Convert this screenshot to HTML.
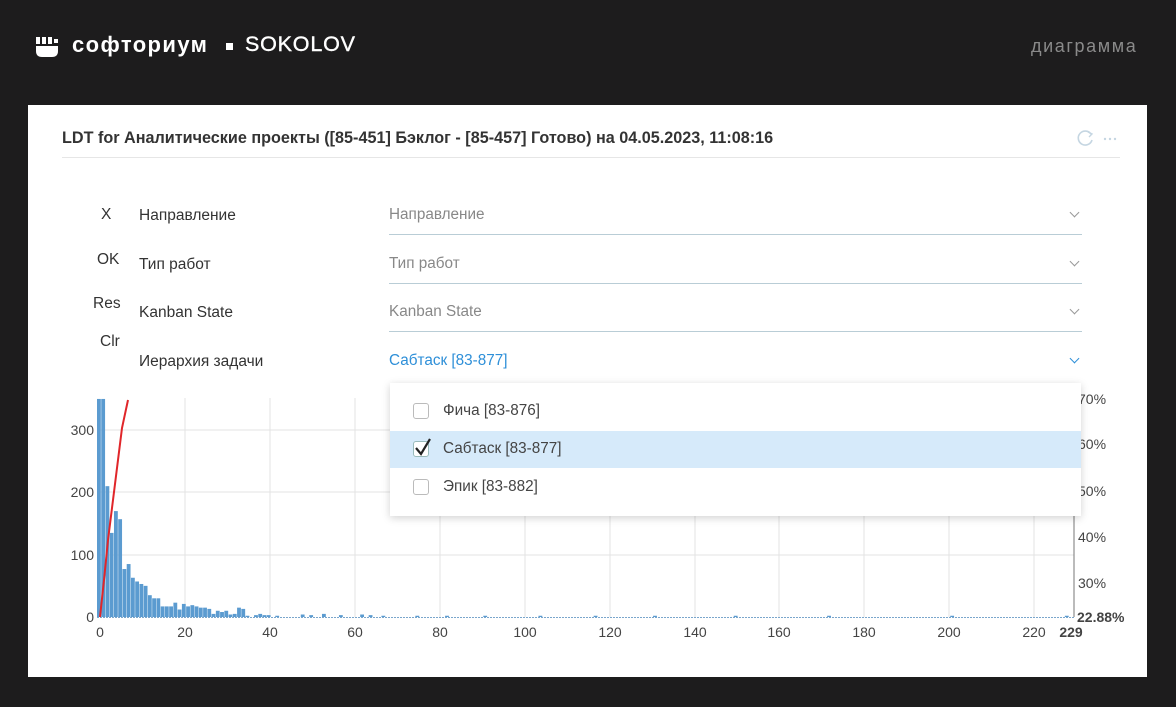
<!DOCTYPE html>
<html><head><meta charset="utf-8"><style>
*{margin:0;padding:0;box-sizing:border-box}
body{width:1176px;height:707px;background:#1d1c1d;font-family:"Liberation Sans",sans-serif;position:relative;overflow:hidden}
.a{position:absolute;white-space:nowrap}
.panel{position:absolute;left:28px;top:105px;width:1119px;height:572px;background:#fff}
.lbl{font-size:15.5px;color:#333}
.ph{font-size:15.3px;color:#888}
.line{position:absolute;height:1px;background:#b9cdd6;left:389px;width:693px}
.chev{position:absolute;left:1071px;width:7px;height:7px;border-right:1.5px solid #999;border-bottom:1.5px solid #999;transform:rotate(45deg)}
.cb{position:absolute;left:413px;width:16px;height:16px;border:1px solid #bbb;border-radius:3px;background:#fff}
</style></head><body>
<svg class="a" style="left:35px;top:36px" width="24" height="22" viewBox="0 0 24 22"><rect x="1" y="1" width="4" height="7" fill="#fff"/><rect x="7" y="1" width="4" height="7" fill="#fff"/><rect x="13" y="1" width="4" height="7" fill="#fff"/><rect x="19" y="3" width="4" height="4" fill="#fff"/><path d="M1 10H23V15Q23 21 17 21H7Q1 21 1 15Z" fill="#fff"/></svg>
<div class="a" style="left:72px;top:32px;font-size:22px;font-weight:bold;color:#fff;letter-spacing:1.4px">софториум</div>
<div class="a" style="left:226px;top:43px;width:7px;height:7px;background:#fff"></div>
<div class="a" style="left:245px;top:32px;font-size:21.5px;color:#fff;letter-spacing:0.8px;-webkit-text-stroke:0.4px #fff">SOKOLOV</div>
<div class="a" style="left:1031px;top:36px;font-size:18px;color:#8a8a8a;letter-spacing:1.6px">диаграмма</div>
<div class="panel"></div>
<div class="a" style="left:62px;top:129px;font-size:16.2px;font-weight:bold;color:#333">LDT for Аналитические проекты ([85-451] Бэклог - [85-457] Готово) на 04.05.2023, 11:08:16</div>
<div class="a" style="left:62px;top:157px;width:1058px;height:1px;background:#e6e6e6"></div>
<svg class="a" style="left:1076px;top:129px" width="45" height="18"><path d="M15 5A7 7 0 1 0 16 11" fill="none" stroke="#c5d6e2" stroke-width="1.6"/><path d="M12 3L16 5L13 8" fill="none" stroke="#c5d6e2" stroke-width="1.4"/><circle cx="29" cy="10" r="1.2" fill="#c5d6e2"/><circle cx="34" cy="10" r="1.2" fill="#c5d6e2"/><circle cx="39" cy="10" r="1.2" fill="#c5d6e2"/></svg>
<div class="a lbl" style="left:101px;top:206px">X</div>
<div class="a lbl" style="left:97px;top:251px">OK</div>
<div class="a lbl" style="left:93px;top:295px">Res</div>
<div class="a lbl" style="left:100px;top:333px">Clr</div>
<div class="a lbl" style="left:139px;top:207px">Направление</div>
<div class="a lbl" style="left:139px;top:256px">Тип работ</div>
<div class="a lbl" style="left:139px;top:304px">Kanban State</div>
<div class="a lbl" style="left:139px;top:353px">Иерархия задачи</div>
<div class="a ph" style="left:389px;top:206px">Направление</div>
<div class="a ph" style="left:389px;top:255px">Тип работ</div>
<div class="a ph" style="left:389px;top:303px">Kanban State</div>
<div class="a" style="left:389px;top:352px;font-size:15.3px;color:#2e8fd8">Сабтаск [83-877]</div>
<div class="line" style="top:234px"></div><div class="line" style="top:283px"></div><div class="line" style="top:331px"></div>
<div class="chev" style="top:209px"></div><div class="chev" style="top:258px"></div><div class="chev" style="top:306px"></div>
<div class="chev" style="top:355px;border-color:#2e8fd8"></div>
<svg class="a" style="left:0;top:0" width="1176" height="707">
<g stroke="#e3e3e3" stroke-width="1">
<line x1="97" y1="430" x2="1074" y2="430"/><line x1="97" y1="492" x2="1074" y2="492"/><line x1="97" y1="555" x2="1074" y2="555"/>
<line x1="185" y1="398" x2="185" y2="617"/><line x1="270" y1="398" x2="270" y2="617"/><line x1="355" y1="398" x2="355" y2="617"/><line x1="440" y1="398" x2="440" y2="617"/><line x1="525" y1="398" x2="525" y2="617"/><line x1="610" y1="398" x2="610" y2="617"/><line x1="695" y1="398" x2="695" y2="617"/><line x1="779" y1="398" x2="779" y2="617"/><line x1="864" y1="398" x2="864" y2="617"/><line x1="949" y1="398" x2="949" y2="617"/><line x1="1034" y1="398" x2="1034" y2="617"/>
</g>
<line x1="1074" y1="395" x2="1074" y2="617" stroke="#777"/>
<line x1="97" y1="617.5" x2="1074" y2="617.5" stroke="#7aa6cc" stroke-dasharray="2 1"/>
<g transform="translate(97,617) scale(4.245,-0.623)" fill="#5b9bd0">
<rect x="0" width="0.9" height="350"/><rect x="1" width="0.9" height="350"/><rect x="2" width="0.9" height="210"/><rect x="3" width="0.9" height="135"/><rect x="4" width="0.9" height="170"/><rect x="5" width="0.9" height="157"/><rect x="6" width="0.9" height="77"/><rect x="7" width="0.9" height="85"/><rect x="8" width="0.9" height="63"/><rect x="9" width="0.9" height="57"/><rect x="10" width="0.9" height="53"/><rect x="11" width="0.9" height="50"/><rect x="12" width="0.9" height="35"/><rect x="13" width="0.9" height="30"/><rect x="14" width="0.9" height="30"/><rect x="15" width="0.9" height="17"/><rect x="16" width="0.9" height="17"/><rect x="17" width="0.9" height="17"/><rect x="18" width="0.9" height="23"/><rect x="19" width="0.9" height="12"/><rect x="20" width="0.9" height="21"/><rect x="21" width="0.9" height="17"/><rect x="22" width="0.9" height="19"/><rect x="23" width="0.9" height="17"/><rect x="24" width="0.9" height="15"/><rect x="25" width="0.9" height="15"/><rect x="26" width="0.9" height="13"/><rect x="27" width="0.9" height="5"/><rect x="28" width="0.9" height="10"/><rect x="29" width="0.9" height="8"/><rect x="30" width="0.9" height="10"/><rect x="31" width="0.9" height="4"/><rect x="32" width="0.9" height="5"/><rect x="33" width="0.9" height="15"/><rect x="34" width="0.9" height="13"/><rect x="35" width="0.9" height="2"/><rect x="37" width="0.9" height="3"/><rect x="38" width="0.9" height="5"/><rect x="39" width="0.9" height="3"/><rect x="40" width="0.9" height="3"/><rect x="42" width="0.9" height="2"/><rect x="48" width="0.9" height="4"/><rect x="50" width="0.9" height="3"/><rect x="53" width="0.9" height="5"/><rect x="57" width="0.9" height="3"/><rect x="62" width="0.9" height="4"/><rect x="64" width="0.9" height="3"/><rect x="67" width="0.9" height="2"/><rect x="75" width="0.9" height="2"/><rect x="82" width="0.9" height="2"/><rect x="91" width="0.9" height="2"/><rect x="104" width="0.9" height="2"/><rect x="117" width="0.9" height="2"/><rect x="131" width="0.9" height="2"/><rect x="150" width="0.9" height="2"/><rect x="172" width="0.9" height="2"/><rect x="201" width="0.9" height="2"/><rect x="228" width="0.9" height="2"/>
</g>
<path d="M100 617L104 580L108 540L113 500L118 460L122 428L128 400" fill="none" stroke="#e0262a" stroke-width="2"/>
<g font-size="14" fill="#444" font-family="Liberation Sans,sans-serif">
<text x="94" y="435" text-anchor="end">300</text><text x="94" y="497" text-anchor="end">200</text><text x="94" y="560" text-anchor="end">100</text><text x="94" y="622" text-anchor="end">0</text>
<g text-anchor="middle"><text x="100" y="637">0</text><text x="185" y="637">20</text><text x="270" y="637">40</text><text x="355" y="637">60</text><text x="440" y="637">80</text><text x="525" y="637">100</text><text x="610" y="637">120</text><text x="695" y="637">140</text><text x="779" y="637">160</text><text x="864" y="637">180</text><text x="949" y="637">200</text><text x="1034" y="637">220</text><text x="1071" y="637" font-weight="bold">229</text></g>
<text x="1078" y="404">70%</text><text x="1078" y="449">60%</text><text x="1078" y="496">50%</text><text x="1078" y="542">40%</text><text x="1078" y="588">30%</text><text x="1077" y="622" font-weight="bold">22.88%</text>
</g>
</svg>
<div class="a" style="left:390px;top:383px;width:691px;height:133px;background:#fff;box-shadow:0 2px 8px rgba(0,0,0,0.18)"></div>
<div class="a" style="left:390px;top:431px;width:691px;height:37px;background:#d6eafa"></div>
<div class="cb" style="top:403px"></div>
<div class="cb" style="top:441px;border-color:#9bb"></div>
<svg class="a" style="left:413px;top:437px" width="20" height="20"><path d="M3 11L8 17L17 2" fill="none" stroke="#222" stroke-width="2.2"/></svg>
<div class="cb" style="top:479px"></div>
<div class="a" style="left:443px;top:402px;font-size:15.3px;color:#444">Фича [83-876]</div>
<div class="a" style="left:443px;top:440px;font-size:15.3px;color:#444">Сабтаск [83-877]</div>
<div class="a" style="left:443px;top:478px;font-size:15.3px;color:#444">Эпик [83-882]</div>
</body></html>
